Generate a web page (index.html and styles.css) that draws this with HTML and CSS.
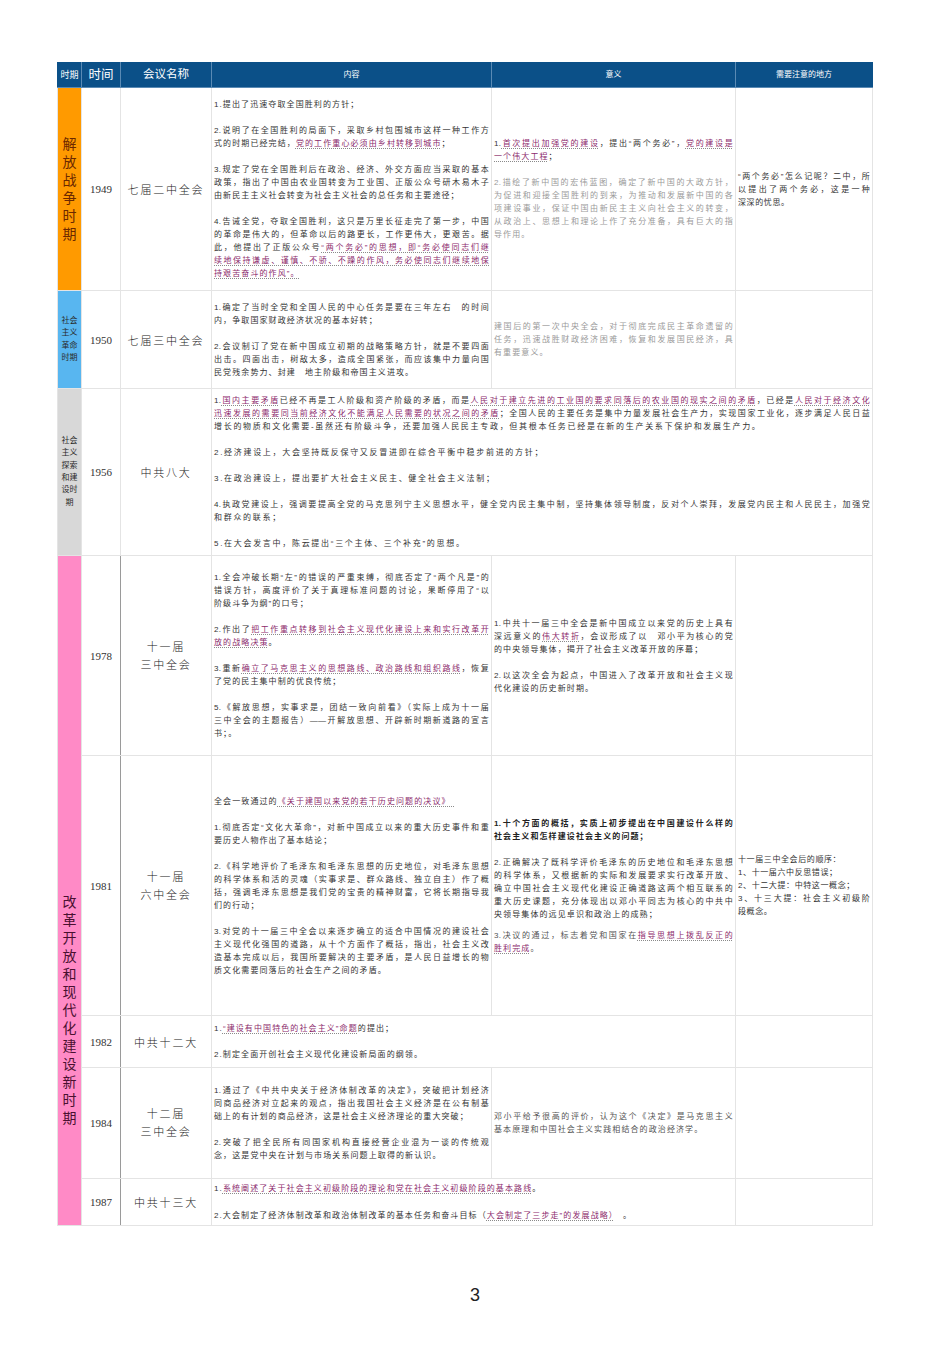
FILE: index.html
```html
<!DOCTYPE html>
<html lang="zh-CN">
<head>
<meta charset="utf-8">
<title>会议表</title>
<link rel="stylesheet" href="styles.css">
</head>
<body>
<div class="page">
<table class="tbl">
<colgroup><col class="c1"><col class="c2"><col class="c3"><col class="c4"><col class="c5"><col class="c6"></colgroup>
<tr class="hd">
<th class="h-per">时期</th><th class="h-time">时间</th><th class="h-name">会议名称</th><th class="h-sm">内容</th><th class="h-sm">意义</th><th class="h-sm">需要注意的地方</th>
</tr>
<tr class="r1">
<td class="per orange"><div class="vt">解放战争时期</div></td>
<td class="yr">1949</td>
<td class="nm">七届二中全会</td>
<td class="tx">
<div class="p"><span class="ln">1.提出了迅速夺取全国胜利的方针；</span></div>
<div class="p"><span class="ln f">2.说明了在全国胜利的局面下，采取乡村包围城市这样一种工作方</span><span class="ln">式的时期已经完结，<span class="k">党的工作重心必须由乡村转移到城市</span>；</span></div>
<div class="p"><span class="ln f">3.规定了党在全国胜利后在政治、经济、外交方面应当采取的基本</span><span class="ln f">政策，指出了中国由农业国转变为工业国、正版公众号研木易木子</span><span class="ln">由新民主主义社会转变为社会主义社会的总任务和主要途径；</span></div>
<div class="p"><span class="ln f">4.告诫全党，夺取全国胜利，这只是万里长征走完了第一步，中国</span><span class="ln f">的革命是伟大的，但革命以后的路更长，工作更伟大，更艰苦。据</span><span class="ln f">此，他提出了正版公众号<span class="k">“两个务必”的思想，即“务必使同志们继</span></span><span class="ln f"><span class="k">续地保持谦虚、谨慎、不骄、不躁的作风，务必使同志们继续地保</span></span><span class="ln"><span class="k">持艰苦奋斗的作风”。</span></span></div>
</td>
<td class="tx">
<div class="p"><span class="ln f">1.<span class="k">首次提出加强党的建设</span>，提出“两个务必”，<span class="k">党的建设是</span></span><span class="ln"><span class="k">一个伟大工程</span>；</span></div>
<div class="p g"><span class="ln f">2.描绘了新中国的宏伟蓝图，确定了新中国的大政方针，</span><span class="ln f">为促进和迎接全国胜利的到来，为推动和发展新中国的各</span><span class="ln f">项建设事业，保证中国由新民主主义向社会主义的转变，</span><span class="ln f">从政治上、思想上和理论上作了充分准备，具有巨大的指</span><span class="ln">导作用。</span></div>
</td>
<td class="tx nt">
<div class="p"><span class="ln f">“两个务必”怎么记呢？二中，所</span><span class="ln f">以提出了两个务必，这是一种</span><span class="ln">深深的忧思。</span></div>
</td>
</tr>
<tr class="r2">
<td class="per blue"><div class="vs">社会<br>主义<br>革命<br>时期</div></td>
<td class="yr">1950</td>
<td class="nm">七届三中全会</td>
<td class="tx">
<div class="p"><span class="ln f">1.确定了当时全党和全国人民的中心任务是要在三年左右　的时间</span><span class="ln">内，争取国家财政经济状况的基本好转；</span></div>
<div class="p"><span class="ln f">2.会议制订了党在新中国成立初期的战略策略方针，就是不要四面</span><span class="ln f">出击。四面出击，树敌太多，造成全国紧张，而应该集中力量向国</span><span class="ln">民党残余势力、封建　地主阶级和帝国主义进攻。</span></div>
</td>
<td class="tx">
<div class="p g"><span class="ln f">建国后的第一次中央全会，对于彻底完成民主革命遗留的</span><span class="ln f">任务，迅速战胜财政经济困难，恢复和发展国民经济，具</span><span class="ln">有重要意义。</span></div>
</td>
<td class="tx nt"></td>
</tr>
<tr class="r3">
<td class="per grey"><div class="vs">社会<br>主义<br>探索<br>和建<br>设时<br>期</div></td>
<td class="yr">1956</td>
<td class="nm">中共八大</td>
<td class="tx wide" colspan="3">
<div class="p"><span class="ln f">1.<span class="k">国内主要矛盾</span>已经不再是工人阶级和资产阶级的矛盾，而是<span class="k">人民对于建立先进的工业国的要求同落后的农业国的现实之间的矛盾</span>，已经是<span class="k">人民对于经济文化</span></span><span class="ln f"><span class="k">迅速发展的需要同当前经济文化不能满足人民需要的状况之间的矛盾</span>；全国人民的主要任务是集中力量发展社会生产力，实现国家工业化，逐步满足人民日益</span><span class="ln">增长的物质和文化需要-虽然还有阶级斗争，还要加强人民民主专政，但其根本任务已经是在新的生产关系下保护和发展生产力。</span></div>
<div class="p"><span class="ln">2.经济建设上，大会坚持既反保守又反冒进即在综合平衡中稳步前进的方针；</span></div>
<div class="p"><span class="ln">3.在政治建设上，提出要扩大社会主义民主、健全社会主义法制；</span></div>
<div class="p"><span class="ln f">4.执政党建设上，强调要提高全党的马克思列宁主义思想水平，健全党内民主集中制，坚持集体领导制度，反对个人崇拜，发展党内民主和人民民主，加强党</span><span class="ln">和群众的联系；</span></div>
<div class="p"><span class="ln">5.在大会发言中，陈云提出“三个主体、三个补充”的思想。</span></div>
</td>
</tr>
<tr class="r4">
<td class="per pink" rowspan="5"><div class="vt dark">改革开放和现代化建设新时期</div></td>
<td class="yr sep">1978</td>
<td class="nm"><span class="nl">十一届</span><span class="nl">三中全会</span></td>
<td class="tx">
<div class="p"><span class="ln f">1.全会冲破长期“左”的错误的严重束缚，彻底否定了“两个凡是”的</span><span class="ln f">错误方针，高度评价了关于真理标准问题的讨论，果断停用了“以</span><span class="ln">阶级斗争为纲”的口号；</span></div>
<div class="p"><span class="ln f">2.作出了<span class="k">把工作重点转移到社会主义现代化建设上来和实行改革开</span></span><span class="ln"><span class="k">放的战略决策</span>。</span></div>
<div class="p"><span class="ln f">3.重新<span class="k">确立了马克思主义的思想路线、政治路线和组织路线</span>，恢复</span><span class="ln">了党的民主集中制的优良传统；</span></div>
<div class="p"><span class="ln f">5.《解放思想，实事求是，团结一致向前看》（实际上成为十一届</span><span class="ln f">三中全会的主题报告）——开解放思想、开辟新时期新道路的宣言</span><span class="ln">书；。</span></div>
</td>
<td class="tx">
<div class="p"><span class="ln f">1.中共十一届三中全会是新中国成立以来党的历史上具有</span><span class="ln f">深远意义的<span class="k">伟大转折</span>，会议形成了以　邓小平为核心的党</span><span class="ln">的中央领导集体，揭开了社会主义改革开放的序幕；</span></div>
<div class="p"><span class="ln f">2.以这次全会为起点，中国进入了改革开放和社会主义现</span><span class="ln">代化建设的历史新时期。</span></div>
</td>
<td class="tx nt"></td>
</tr>
<tr class="r5">
<td class="yr sep">1981</td>
<td class="nm"><span class="nl">十一届</span><span class="nl">六中全会</span></td>
<td class="tx">
<div class="p"><span class="ln">全会一致通过的<span class="k">《关于建国以来党的若干历史问题的决议》　</span></span></div>
<div class="p"><span class="ln f">1.彻底否定“文化大革命”，对新中国成立以来的重大历史事件和重</span><span class="ln">要历史人物作出了基本结论；</span></div>
<div class="p"><span class="ln f">2.《科学地评价了毛泽东和毛泽东思想的历史地位，对毛泽东思想</span><span class="ln f">的科学体系和活的灵魂（实事求是、群众路线、独立自主）作了概</span><span class="ln f">括，强调毛泽东思想是我们党的宝贵的精神财富，它将长期指导我</span><span class="ln">们的行动；</span></div>
<div class="p"><span class="ln f">3.对党的十一届三中全会以来逐步确立的适合中国情况的建设社会</span><span class="ln f">主义现代化强国的道路，从十个方面作了概括，指出，社会主义改</span><span class="ln f">造基本完成以后，我国所要解决的主要矛盾，是人民日益增长的物</span><span class="ln">质文化需要同落后的社会生产之间的矛盾。</span></div>
</td>
<td class="tx">
<div class="p b"><span class="ln f">1.十个方面的概括，实质上初步提出在中国建设什么样的</span><span class="ln">社会主义和怎样建设社会主义的问题；</span></div>
<div class="p"><span class="ln f">2.正确解决了既科学评价毛泽东的历史地位和毛泽东思想</span><span class="ln f">的科学体系，又根据新的实际和发展要求实行改革开放、</span><span class="ln f">确立中国社会主义现代化建设正确道路这两个相互联系的</span><span class="ln f">重大历史课题，充分体现出以邓小平同志为核心的中共中</span><span class="ln">央领导集体的远见卓识和政治上的成熟；</span></div>
<div class="p close m"><span class="ln f">3.决议的通过，标志着党和国家在<span class="k">指导思想上拨乱反正的</span></span><span class="ln"><span class="k">胜利完成</span>。</span></div>
</td>
<td class="tx nt">
<div class="p"><span class="ln">十一届三中全会后的顺序：</span><span class="ln">1、十一届六中反思错误；</span><span class="ln">2、十二大提：中特这一概念；</span><span class="ln f">3、十三大提：社会主义初级阶</span><span class="ln">段概念。</span></div>
</td>
</tr>
<tr class="r6">
<td class="yr sep">1982</td>
<td class="nm">中共十二大</td>
<td class="tx" colspan="2">
<div class="p"><span class="ln">1.<span class="k">“建设有中国特色的社会主义”命题</span>的提出；</span></div>
<div class="p"><span class="ln">2.制定全面开创社会主义现代化建设新局面的纲领。</span></div>
</td>
<td class="tx nt"></td>
</tr>
<tr class="r7">
<td class="yr sep">1984</td>
<td class="nm"><span class="nl">十二届</span><span class="nl">三中全会</span></td>
<td class="tx">
<div class="p"><span class="ln f">1.通过了《中共中央关于经济体制改革的决定》，突破把计划经济</span><span class="ln f">同商品经济对立起来的观点，指出我国社会主义经济是在公有制基</span><span class="ln">础上的有计划的商品经济，这是社会主义经济理论的重大突破；</span></div>
<div class="p"><span class="ln f">2.突破了把全民所有同国家机构直接经营企业混为一谈的传统观</span><span class="ln">念，这是党中央在计划与市场关系问题上取得的新认识。</span></div>
</td>
<td class="tx">
<div class="p m"><span class="ln f">邓小平给予很高的评价，认为这个《决定》是马克思主义</span><span class="ln">基本原理和中国社会主义实践相结合的政治经济学。</span></div>
</td>
<td class="tx nt"></td>
</tr>
<tr class="r8">
<td class="yr sep">1987</td>
<td class="nm">中共十三大</td>
<td class="tx" colspan="2">
<div class="p"><span class="ln">1.<span class="k">系统阐述了关于社会主义初级阶段的理论和党在社会主义初级阶段的基本路线</span>。</span></div>
<div class="p"><span class="ln">2.大会制定了经济体制改革和政治体制改革的基本任务和奋斗目标（<span class="k">大会制定了三步走”的发展战略）</span>　。</span></div>
</td>
<td class="tx nt"></td>
</tr>
</table>
<div class="pgno">3</div>
</div>
</body>
</html>
```
FILE: styles.css
```css
html, body {
  margin: 0;
  padding: 0;
  background: #ffffff;
}
.page {
  width: 950px;
  height: 1345px;
  padding: 62px 0 0 57px;
  box-sizing: border-box;
  font-family: "Liberation Sans", "Noto Sans CJK SC", sans-serif;
  color: #333333;
}
.tbl {
  border-collapse: collapse;
  table-layout: fixed;
  width: 815px;
}
.c1 { width: 24px; }
.c2 { width: 39px; }
.c3 { width: 91px; }
.c4 { width: 280px; }
.c5 { width: 244px; }
.c6 { width: 137px; }

.tbl td, .tbl th {
  border: 1px solid #e4e4e4;
  padding: 0;
  vertical-align: middle;
}
.hd { height: 25px; }
.hd th {
  background: #0b5088;
  color: #ffffff;
  font-weight: normal;
  text-align: center;
  border-color: #5a8ab4;
  border-top-color: #0b5088;
  line-height: 1;
}
.hd th:first-child { border-left-color: #0b5088; }
.hd th:last-child { border-right-color: #0b5088; }
.h-per { font-size: 9px; }
.h-time { font-size: 12.5px; }
.h-name { font-size: 11.5px; }
.h-sm { font-size: 8px; }

.r1 { height: 203px; }
.r2 { height: 98px; }
.r3 { height: 167px; }
.r4 { height: 200px; }
.r5 { height: 260px; }
.r6 { height: 52px; }
.r7 { height: 111px; }
.r8 { height: 47px; }

.per { text-align: center; }
.orange { background: #ff9a00; }
.blue { background: #58b6f0; }
.grey { background: #d8d8d8; }
.pink {
  background: #ff8ac6;
  vertical-align: top !important;
  padding-top: 337px !important;
}
.vt {
  width: 14px;
  margin: 0 auto;
  font-size: 14px;
  line-height: 18px;
  color: #6b2800;
  word-break: break-all;
}
.vt.dark { color: #4a1030; }
.vs {
  font-size: 8px;
  line-height: 12.3px;
  color: #2a2a2a;
}

.yr {
  text-align: center;
  font-family: "Liberation Serif", serif;
  font-size: 11px;
  color: #333333;
}
.sep { border-right: 1px solid #9a9a9a !important; }
.nm {
  text-align: center;
  font-size: 11px;
  letter-spacing: 1.8px;
  color: #222222;
  font-weight: 300;
}
.nl {
  display: block;
  line-height: 18px;
}

.tx {
  padding: 0 2px !important;
  font-size: 8px;
}
.p + .p { margin-top: 13px; }
.p.close { margin-top: 8px; }
.r8 .p + .p { margin-top: 14px; }
.ln {
  display: block;
  line-height: 13px;
  height: 13px;
  letter-spacing: 1.1px;
  text-align: left;
}
.ln.f {
  letter-spacing: 0.3px;
  text-align: justify;
  text-align-last: justify;
}
.wide .ln { letter-spacing: 1.7px; }
.wide .ln.f { letter-spacing: 0.3px; }
.nt .ln { letter-spacing: 0.6px; }
.nt .ln.f { letter-spacing: 0.2px; }
.g { color: #9a9a9a; }
.m { color: #555555; }
.b { font-weight: bold; color: #222222; }
.k {
  color: #8c2a6c;
  text-decoration-line: underline;
  text-decoration-style: dotted;
  text-decoration-color: #8a8a8a;
  text-underline-offset: 2px;
}

.pgno {
  width: 836px;
  margin-top: 59px;
  text-align: center;
  font-family: "Liberation Sans", sans-serif;
  font-size: 18px;
  line-height: 20px;
  color: #222222;
}
```
